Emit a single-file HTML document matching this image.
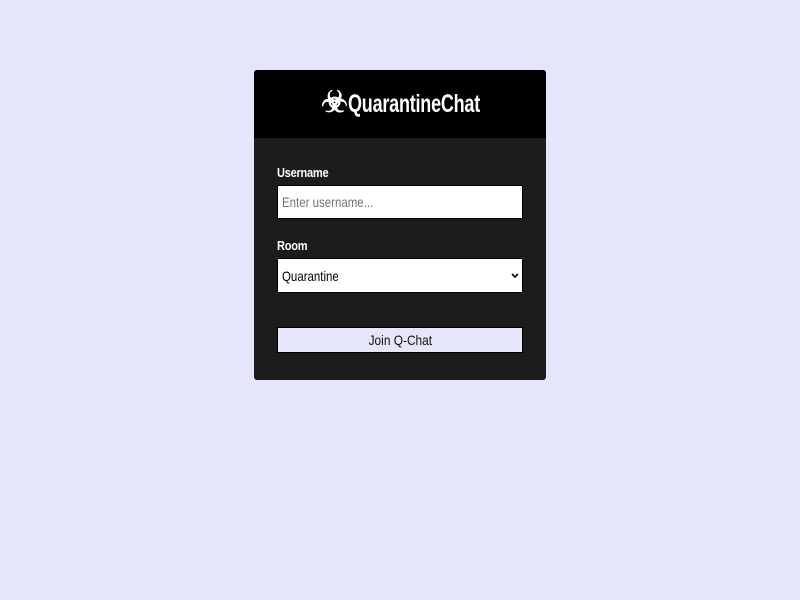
<!DOCTYPE html>
<html><head><style>
body{margin:0;width:800px;height:600px;background:#e6e6fa;font-family:"Liberation Sans",sans-serif;position:relative;overflow:hidden}
.card{position:absolute;left:254px;top:70px;width:292px;height:310px;background:#1c1c1c;border-radius:3px;overflow:hidden}
.head{height:68px;background:#000;color:#fff;position:relative}
.ic{position:absolute;left:67px;top:16px;font-size:30px;line-height:34px;font-weight:bold}
.t{position:absolute;left:94px;top:20px;white-space:nowrap;font-size:25px;transform:scaleX(.72);transform-origin:left top;font-weight:bold;letter-spacing:-0.3px}
.lbl{position:absolute;left:23px;color:#fff;font-size:13px;font-weight:bold;transform:scaleX(.85);transform-origin:left top;letter-spacing:-0.3px}
.box{position:absolute;left:23px;width:246px;background:#fff;border:1px solid #000;box-sizing:border-box}
.ph{position:absolute;left:4px;font-size:14px;transform:scaleX(.82);transform-origin:left top;white-space:nowrap}
.btn{position:absolute;left:23px;top:257px;width:246px;height:26px;background:#e6e6fa;box-sizing:border-box;border:1px solid #000;text-align:center;line-height:24px;font-size:14px;color:#111}
</style></head><body>
<div class="card">
<div class="head"><div class="ic">☣</div><div class="t">QuarantineChat</div></div>
<div class="lbl" style="top:95px">Username</div>
<div class="box" style="top:115px;height:34px"><div class="ph" style="top:8px;color:#757575">Enter username...</div></div>
<div class="lbl" style="top:168px">Room</div>
<div class="box" style="top:188px;height:35px"><div class="ph" style="top:9px;color:#000">Quarantine</div>
<svg style="position:absolute;right:3px;top:14px" width="8" height="6" viewBox="0 0 8 6"><path d="M1 1l3 3 3-3" stroke="#000" stroke-width="1.6" fill="none"/></svg></div>
<div class="btn"><span style="display:inline-block;transform:scaleX(.85)">Join Q-Chat</span></div>
</div>
</body></html>
